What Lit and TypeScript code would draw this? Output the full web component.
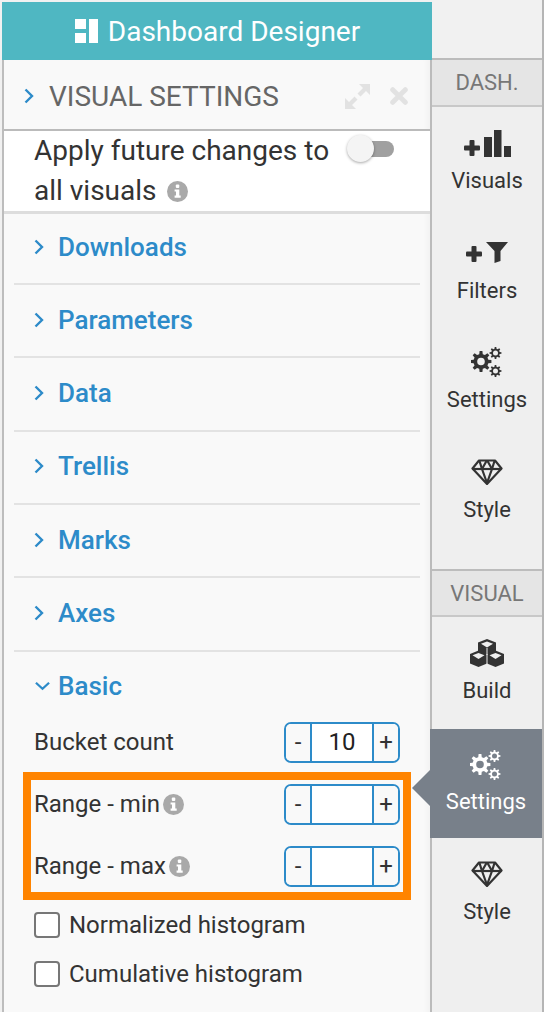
import { LitElement, html, css, svg } from "lit";
import { customElement } from "lit/decorators.js";

function gearPath(cx: number, cy: number, r: number, hole: number, teeth: number): string {
  const pts: string[] = [];
  const step = (Math.PI * 2) / teeth;
  const outer = r;
  const inner = r * 0.72;
  for (let i = 0; i < teeth; i++) {
    const a = i * step;
    const seq: [number, number][] = [
      [a - step * 0.3, inner],
      [a - step * 0.17, outer],
      [a + step * 0.17, outer],
      [a + step * 0.3, inner],
    ];
    for (const [t, rad] of seq) {
      pts.push(`${(cx + Math.cos(t) * rad).toFixed(2)} ${(cy + Math.sin(t) * rad).toFixed(2)}`);
    }
  }
  return (
    `M${pts.join("L")}Z` +
    `M${cx + hole} ${cy}a${hole} ${hole} 0 1 0 ${-2 * hole} 0a${hole} ${hole} 0 1 0 ${2 * hole} 0Z`
  );
}

const gears = svg`<svg class="ic gears" viewBox="0 0 32 30" width="32" height="30" aria-hidden="true">
  <path fill-rule="evenodd" fill="currentColor" d=${gearPath(10, 14.5, 10.5, 3.8, 8)}></path>
  <path fill-rule="evenodd" fill="currentColor" d=${gearPath(24.5, 6, 6, 2.5, 8)}></path>
  <path fill-rule="evenodd" fill="currentColor" d=${gearPath(24.5, 24, 6, 2.5, 8)}></path>
</svg>`;

const gem = svg`<svg class="ic" viewBox="0 0 32 26" width="32" height="26" aria-hidden="true" fill="none" stroke="currentColor" stroke-width="2.2" stroke-linejoin="round">
  <path d="M8 1.500H24L30.500 9.500L16 25L1.500 9.500Z"></path>
  <path d="M1.500 10H30.500"></path>
  <path d="M8.500 2L11 10L16 24L21 10L23.500 2"></path>
  <path d="M11 10L15.500 2M21 10L16.500 2"></path>
</svg>`;

const cubes = svg`<svg class="ic" viewBox="0 0 34 28" width="34" height="28" aria-hidden="true">
  <g fill="currentColor">
    <path d="M17 0L26 3.500V13L17 16.500L8 13V3.500Z"></path>
    <path d="M8.500 11.500L17 15V24.500L8.500 28L0 24.500V15Z"></path>
    <path d="M25.500 11.500L34 15V24.500L25.500 28L17 24.500V15Z"></path>
  </g>
  <g fill="#efefef">
    <path d="M17 2.500L23 4.800L17 8.500L11 4.800Z"></path>
    <path d="M8.500 14L14.500 16.300L8.500 20L2.500 16.300Z"></path>
    <path d="M25.500 14L31.500 16.300L25.500 20L19.500 16.300Z"></path>
  </g>
  <path d="M17 9V16M17 15V27" stroke="#efefef" stroke-width="1"></path>
</svg>`;

const addBars = svg`<svg class="ic" viewBox="0 0 47 27" width="47" height="27" aria-hidden="true" fill="currentColor">
  <rect x="0" y="15.500" width="16" height="5" rx="1"></rect>
  <rect x="5.500" y="10" width="5" height="16" rx="1"></rect>
  <rect x="20" y="7" width="8" height="20"></rect>
  <rect x="30" y="0" width="7.500" height="27"></rect>
  <rect x="40" y="16" width="7" height="11"></rect>
</svg>`;

const addFilter = svg`<svg class="ic" viewBox="0 0 42 21" width="42" height="21" aria-hidden="true" fill="currentColor">
  <rect x="0" y="9.500" width="16" height="5" rx="1"></rect>
  <rect x="5.500" y="4" width="5" height="16" rx="1"></rect>
  <path d="M20 0H42L34.500 9V19L28.500 21V9Z"></path>
</svg>`;

const chevRight = svg`<svg class="chev" viewBox="0 0 10 16" width="10" height="16" aria-hidden="true" fill="none" stroke="currentColor" stroke-width="2.4"><path d="M1.500 1.500L8 8L1.500 14.500"></path></svg>`;
const chevDown = svg`<svg class="chev" viewBox="0 0 16 10" width="15" height="10" aria-hidden="true" fill="none" stroke="currentColor" stroke-width="2.400"><path d="M1 1.500L8 8L15 1.500"></path></svg>`;

const info = svg`<svg class="info" viewBox="0 0 21 21" width="21" height="21" aria-hidden="true">
  <circle cx="10.500" cy="10.500" r="10.500" fill="#a9a9a9"></circle>
  <rect x="8.800" y="3.600" width="3.500" height="3.400" rx="1" fill="#fff"></rect>
  <path d="M7.600 8.500H12.300V14.600H13.700V16.700H7.600V14.600H9V10.600H7.600Z" fill="#fff"></path>
</svg>`;

@customElement("app-root")
export class AppRoot extends LitElement {
  static styles = css`
    :host {
      display: block;
      position: relative;
      width: 544px;
      height: 1012px;
      overflow: hidden;
      background: #f1f1f1;
      font-family: Roboto, "Noto Sans", sans-serif;
      color: #333;
    }
    .page {
      display: flex;
      height: 1010px;
      padding: 2px 0 0 2px;
      align-items: stretch;
    }
    .left {
      width: 428px;
      flex: none;
      display: flex;
      flex-direction: column;
      position: relative;
      z-index: 1;
    }
    .hdr {
      height: 58px;
      margin-right: -2px;
      background: #4fb7c2;
      color: #fff;
      font-size: 28px;
      display: flex;
      align-items: center;
      justify-content: center;
      gap: 10px;
      flex: none;
      padding-left: 1px;
    }
    .panel {
      flex: 1;
      border-left: 2px solid #bdbdbd;
      display: flex;
      flex-direction: column;
      background: #f9f9f9;
      box-shadow: inset -8px 0 8px -8px rgba(0, 0, 0, 0.06);
    }
    .title {
      height: 71px;
      box-sizing: border-box;
      flex: none;
      display: flex;
      align-items: center;
      padding: 3px 22px 0 20px;
      color: #666;
      font-size: 28px;
      border-bottom: 2px solid #bbb;
    }
    .title .chev {
      color: #2d8bc9;
      margin-right: 15px;
    }
    .title .tx {
      flex: 1;
    }
    .title .tools {
      display: flex;
      align-items: center;
      gap: 20px;
      color: #e2e2e2;
    }
    .apply {
      height: 83px;
      flex: none;
      box-sizing: border-box;
      background: #fff;
      border-bottom: 3px solid #ddd;
      padding-left: 30px;
      display: flex;
      font-size: 28px;
      line-height: 40px;
      color: #333;
    }
    .apply .txt {
      width: 313px;
      flex: none;
    }
    .apply .info {
      vertical-align: -2px;
      margin-left: 3px;
    }
    .sw {
      position: relative;
      width: 47px;
      height: 28px;
      margin-top: 4px;
    }
    .sw .track {
      position: absolute;
      left: 2px;
      right: 0;
      top: 6px;
      height: 16px;
      border-radius: 8px;
      background: #a0a0a0;
    }
    .sw .knob {
      position: absolute;
      left: 0;
      top: 0;
      width: 27px;
      height: 27px;
      border-radius: 50%;
      background: #f4f4f4;
      box-shadow: 0 1px 3px rgba(0, 0, 0, 0.35);
    }
    .list {
      flex: 1;
      padding: 0 10px;
    }
    .sec {
      height: 71.33px;
      box-sizing: content-box;
      border-bottom: 2px solid #e3e3e3;
      display: flex;
      align-items: center;
      color: #2d8bc9;
      font-size: 26px;
      font-weight: 500;
      padding-left: 20px;
    }
    .sec span,
    .sec .chev {
      margin-bottom: 2px;
    }
    .sec:first-child {
      height: 69px;
    }
    .sec:first-child span,
    .sec:first-child .chev {
      margin-bottom: 4px;
    }
    .sec .chev {
      margin-right: 14px;
    }
    .sec.open {
      border: 0;
      height: 70px;
    }
    .sec.open .chev {
      margin-left: 1px;
      margin-right: 8px;
    }
    .rows {
      padding: 0 20px;
      display: flex;
      flex-direction: column;
      gap: 21px;
      font-size: 24px;
      color: #333;
    }
    .row {
      display: flex;
      align-items: center;
      justify-content: space-between;
      height: 41px;
    }
    .lab {
      display: flex;
      align-items: center;
      gap: 3px;
    }
    .stp {
      width: 116px;
      height: 41px;
      box-sizing: border-box;
      border: 2px solid #2d8bc9;
      border-radius: 7px;
      display: grid;
      grid-template-columns: 24px 1fr 24px;
      background: #fff;
      font-size: 24px;
      line-height: 37px;
      text-align: center;
      overflow: hidden;
    }
    .stp .b {
      background: #f9f9f9;
    }
    .stp .v {
      border-left: 2px solid #2d8bc9;
      border-right: 2px solid #2d8bc9;
      color: #222;
    }
    .cks {
      display: flex;
      flex-direction: column;
      gap: 23px;
      margin-top: 4px;
    }
    .ck {
      display: flex;
      align-items: center;
      gap: 9px;
      height: 26px;
    }
    .ck i {
      width: 26px;
      height: 26px;
      box-sizing: border-box;
      border: 2px solid #777;
      border-radius: 4px;
      background: #fff;
      display: block;
    }
    .hl {
      position: absolute;
      left: 23px;
      top: 772px;
      width: 388px;
      height: 128px;
      box-sizing: border-box;
      border: 8px solid #ff8400;
      z-index: 4;
      pointer-events: none;
    }
    .rail {
      flex: 1;
      border-left: 2px solid #bbb;
      border-right: 2px solid #b5b5b5;
      background: #efefef;
      display: flex;
      flex-direction: column;
      margin-top: -2px;
      text-align: center;
      font-size: 22px;
      color: #333;
    }
    .cap {
      height: 45px;
      flex: none;
      background: #e5e5e5;
      border-top: 2px solid #bcbcbc;
      border-bottom: 2px solid #c8c8c8;
      color: #777;
      font-size: 22px;
      line-height: 45px;
    }
    .cap.second {
      height: 44px;
    }
    .top {
      height: 58px;
      margin-left: -2px;
      background: #f1f1f1;
      flex: none;
    }
    .it {
      height: 109.7px;
      flex: none;
      display: flex;
      flex-direction: column;
      align-items: center;
      position: relative;
    }
    .it .iw {
      height: 36px;
      margin-top: 18px;
      display: flex;
      align-items: center;
      justify-content: center;
    }
    .it .n {
      line-height: 26px;
      margin-top: 7px;
    }
    .gap {
      height: 23.2px;
      flex: none;
    }
    .it.sm {
      height: 112px;
    }
    .it.on {
      background: #78808a;
      color: #fff;
      height: 109px;
      width: 112px;
      margin-left: -2px;
      z-index: 3;
    }
    .it.on .n {
      margin-top: 6px;
    }
    .it.on::before {
      content: "";
      position: absolute;
      left: -18px;
      top: 41px;
      border-style: solid;
      border-width: 18px 18px 18px 0;
      border-color: transparent #78808a transparent transparent;
    }
  `;

  private sec(name: string) {
    return html`<div class="sec">${chevRight}<span>${name}</span></div>`;
  }

  private item(icon: unknown, name: string, cls = "") {
    return html`<div class="it ${cls}"><div class="iw">${icon}</div><div class="n">${name}</div></div>`;
  }

  private stepper(value = "") {
    return html`<div class="stp"><div class="b">-</div><div class="v">${value}</div><div class="b">+</div></div>`;
  }

  render() {
    return html`
      <div class="page">
        <div class="left">
          <div class="hdr">
            <svg viewBox="0 0 23 24" width="23" height="24" aria-hidden="true" fill="#fff">
              <rect x="0" y="0" width="11" height="10"></rect>
              <rect x="0" y="14" width="11" height="10"></rect>
              <rect x="14" y="0" width="9" height="24"></rect>
            </svg>
            <span>Dashboard Designer</span>
          </div>
          <div class="panel">
            <div class="title">
              ${chevRight}
              <span class="tx">VISUAL SETTINGS</span>
              <span class="tools">
                <svg viewBox="0 0 25 25" width="25" height="25" aria-hidden="true" fill="currentColor">
                  <path d="M14 0H25V11L21 7L15.500 12.500L12.500 9.500L18 4Z"></path>
                  <path d="M11 25H0V14L4 18L9.500 12.500L12.500 15.500L7 21Z"></path>
                </svg>
                <svg viewBox="0 0 20 20" width="18" height="18" aria-hidden="true" fill="none" stroke="currentColor" stroke-width="5.500" stroke-linecap="round">
                  <path d="M3 3L17 17M17 3L3 17"></path>
                </svg>
              </span>
            </div>
            <div class="apply">
              <div class="txt">Apply future changes to all visuals ${info}</div>
              <div class="sw"><div class="track"></div><div class="knob"></div></div>
            </div>
            <div class="list">
              ${["Downloads", "Parameters", "Data", "Trellis", "Marks", "Axes"].map((n) => this.sec(n))}
              <div class="sec open">${chevDown}<span>Basic</span></div>
              <div class="rows">
                <div class="row"><span>Bucket count</span>${this.stepper("10")}</div>
                <div class="row"><span class="lab">Range - min ${info}</span>${this.stepper()}</div>
                <div class="row"><span class="lab">Range - max ${info}</span>${this.stepper()}</div>
                <div class="cks">
                  <div class="ck"><i></i><span>Normalized histogram</span></div>
                  <div class="ck"><i></i><span>Cumulative histogram</span></div>
                </div>
              </div>
            </div>
          </div>
        </div>
        <div class="rail">
          <div class="top"></div>
          <div class="cap">DASH.</div>
          ${this.item(addBars, "Visuals")}
          ${this.item(addFilter, "Filters")}
          ${this.item(gears, "Settings")}
          ${this.item(gem, "Style")}
          <div class="gap"></div>
          <div class="cap second">VISUAL</div>
          ${this.item(cubes, "Build", "sm")}
          ${this.item(gears, "Settings", "on")}
          ${this.item(gem, "Style")}
        </div>
      </div>
      <div class="hl"></div>
    `;
  }
}
